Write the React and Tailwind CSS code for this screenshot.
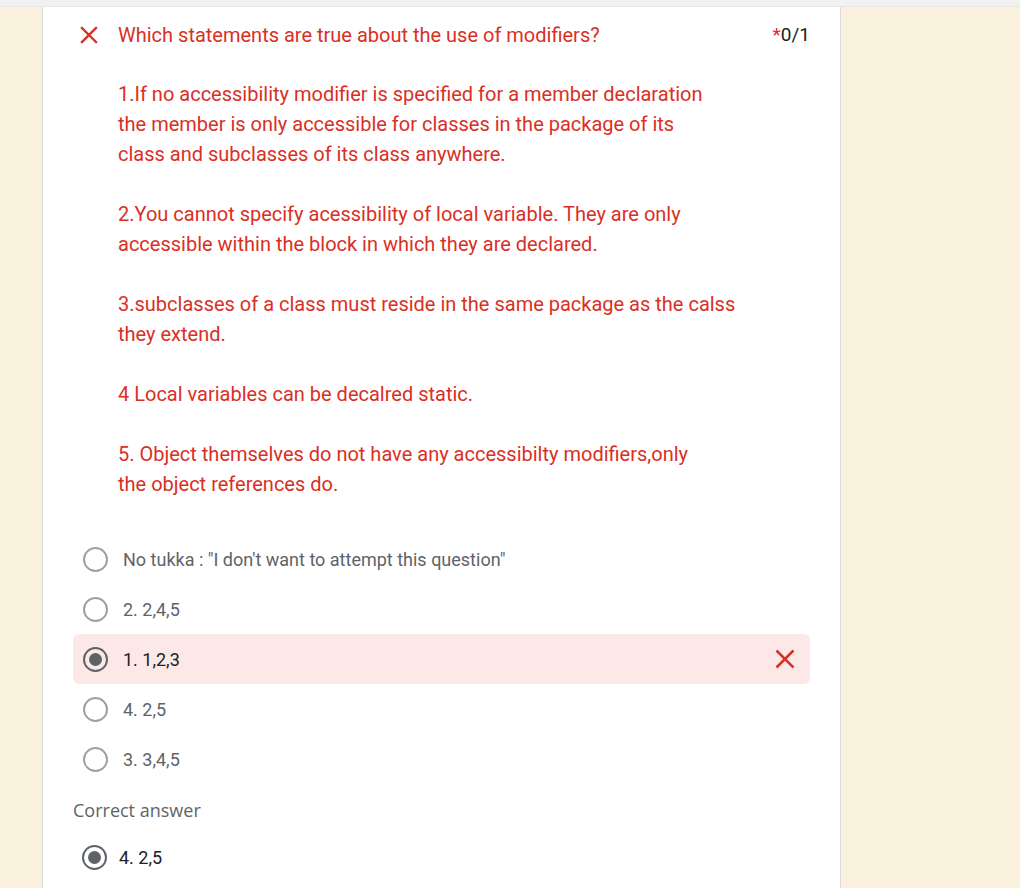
import React from "react";

const XIcon = ({ className }) => (
  <svg viewBox="0 0 24 24" className={className} fill="none" stroke="currentColor" strokeWidth="2.4" strokeLinecap="square">
    <path d="M5 5 L19 19 M19 5 L5 19" />
  </svg>
);

const Radio = ({ checked }) => (
  <div
    className={`w-[25px] h-[25px] rounded-full border-2 flex items-center justify-center shrink-0 ${
      checked ? "border-[#5f6368]" : "border-[#9aa0a6]"
    }`}
  >
    {checked && <div className="w-[13px] h-[13px] rounded-full bg-[#5f6368]" />}
  </div>
);

const paragraphs = [
  [
    "1.If no accessibility modifier is specified for a member declaration",
    "the member is only accessible for classes in the package of its",
    "class and subclasses of its class anywhere.",
  ],
  [
    "2.You cannot specify acessibility of local variable. They are only",
    "accessible within the block in which they are declared.",
  ],
  ["3.subclasses of a class must reside in the same package as the calss", "they extend."],
  ["4 Local variables can be decalred static."],
  [
    "5. Object themselves do not have any accessibilty modifiers,only",
    "the object references do.",
  ],
];

const options = [
  { label: 'No tukka : "I don\'t want to attempt this question"' },
  { label: "2. 2,4,5" },
  { label: "1. 1,2,3", selected: true },
  { label: "4. 2,5" },
  { label: "3. 3,4,5" },
];

const App = () => {
  return (
    <div className="w-[1020px] h-[888px] overflow-hidden bg-[#faf2dd] flex flex-col" style={{ fontFamily: "Roboto, Arial, sans-serif" }}>
      {/* Top strip */}
      <div className="h-[7px] bg-[#f1f1f1] border-b border-[#e6e6e6] shrink-0" />

      <div className="flex flex-1">
        <div className="w-[42px] shrink-0" />

        {/* Card */}
        <div className="w-[799px] bg-white border-x border-[#dadce0] px-[30px] flex flex-col">
          {/* Header */}
          <div className="flex items-start pt-[14px]">
            <XIcon className="w-[24px] h-[24px] text-[#d93025] mt-[2px] ml-[4px] shrink-0" />
            <div className="flex-1 ml-[17px] text-[20px] leading-[28px] text-[#d93025]">
              Which statements are true about the use of modifiers?
            </div>
            <div className="text-[19px] leading-[28px] text-[#202124]">
              <span className="text-[#d93025]">*</span>0/1
            </div>
          </div>

          {/* Question body */}
          <div className="pl-[45px] mt-[30px] text-[20px] leading-[30px] text-[#d93025] flex flex-col gap-[30px]">
            {paragraphs.map((p, i) => (
              <div key={i}>
                {p.map((line, j) => (
                  <div key={j}>{line}</div>
                ))}
              </div>
            ))}
          </div>

          {/* Options */}
          <div className="mt-[35px] flex flex-col">
            {options.map((o, i) => (
              <div
                key={i}
                className={`h-[50px] flex items-center pl-[10px] pr-[12px] rounded-[6px] ${
                  o.selected ? "bg-[#fce8e6]" : ""
                }`}
              >
                <Radio checked={o.selected} />
                <span
                  className={`ml-[15px] flex-1 text-[18px] ${
                    o.selected ? "text-[#202124]" : "text-[#5f6368]"
                  }`}
                >
                  {o.label}
                </span>
                {o.selected && <XIcon className="w-[26px] h-[26px] text-[#d93025]" />}
              </div>
            ))}
          </div>

          {/* Correct answer */}
          <div className="mt-[13px] text-[18px] text-[#5f6368]" style={{ fontFamily: "'Open Sans', Roboto, sans-serif", fontWeight: 500 }}>
            Correct answer
          </div>
          <div className="mt-[20px] flex items-center pl-[9px]">
            <Radio checked />
            <span className="ml-[12px] text-[18px] text-[#202124]">4. 2,5</span>
          </div>
        </div>

        <div className="flex-1" />
      </div>
    </div>
  );
};

export default App;
